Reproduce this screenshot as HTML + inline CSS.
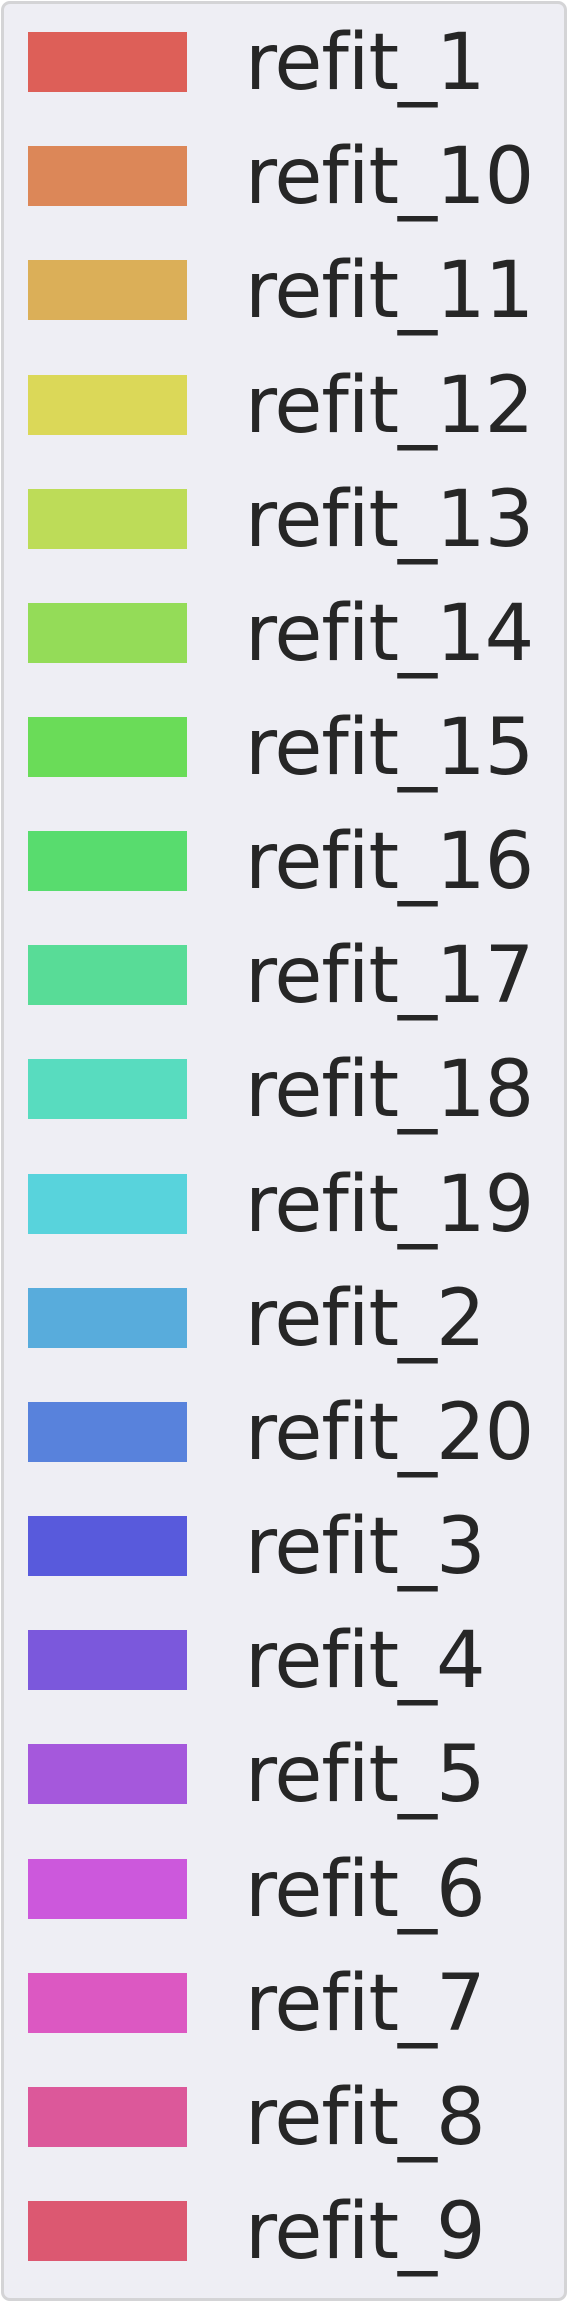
<!DOCTYPE html>
<html><head><style>
html,body{margin:0;padding:0;background:#ffffff;}
body{width:568px;height:2301px;position:relative;overflow:hidden;font-family:"DejaVu Sans","Liberation Sans",sans-serif;}
.box{position:absolute;left:1px;top:1px;width:560px;height:2294px;border:3px solid #d4d4d6;border-radius:9px;background:#eeeef4;}
.s{position:absolute;left:28px;width:159px;height:60px;}
.t{position:absolute;left:245px;font-size:78px;line-height:78px;letter-spacing:-1px;font-variant-ligatures:none;font-feature-settings:"liga" 0;color:#262626;white-space:nowrap;margin-top:1.5px;}
</style></head><body>
<div class="box"></div>
<div class="s" style="top:32px;background:#dd5f58"></div><div class="t" style="top:22.5px">ref&zwnj;it_1</div>
<div class="s" style="top:146px;background:#dc8758"></div><div class="t" style="top:136.7px">ref&zwnj;it_10</div>
<div class="s" style="top:260px;background:#dbaf58"></div><div class="t" style="top:250.8px">ref&zwnj;it_11</div>
<div class="s" style="top:375px;background:#dbd858"></div><div class="t" style="top:365px">ref&zwnj;it_12</div>
<div class="s" style="top:489px;background:#bddc58"></div><div class="t" style="top:479.1px">ref&zwnj;it_13</div>
<div class="s" style="top:603px;background:#94dc58"></div><div class="t" style="top:593.3px">ref&zwnj;it_14</div>
<div class="s" style="top:717px;background:#6adc58"></div><div class="t" style="top:707.5px">ref&zwnj;it_15</div>
<div class="s" style="top:831px;background:#58dc6e"></div><div class="t" style="top:821.6px">ref&zwnj;it_16</div>
<div class="s" style="top:945px;background:#58dc97"></div><div class="t" style="top:935.8px">ref&zwnj;it_17</div>
<div class="s" style="top:1059px;background:#58dcbf"></div><div class="t" style="top:1049.9px">ref&zwnj;it_18</div>
<div class="s" style="top:1174px;background:#58d3dc"></div><div class="t" style="top:1164.1px">ref&zwnj;it_19</div>
<div class="s" style="top:1288px;background:#58acdc"></div><div class="t" style="top:1278.3px">ref&zwnj;it_2</div>
<div class="s" style="top:1402px;background:#5882dc"></div><div class="t" style="top:1392.4px">ref&zwnj;it_20</div>
<div class="s" style="top:1516px;background:#585adc"></div><div class="t" style="top:1506.6px">ref&zwnj;it_3</div>
<div class="s" style="top:1630px;background:#7b58dc"></div><div class="t" style="top:1620.7px">ref&zwnj;it_4</div>
<div class="s" style="top:1744px;background:#a558dc"></div><div class="t" style="top:1734.9px">ref&zwnj;it_5</div>
<div class="s" style="top:1859px;background:#cc58dc"></div><div class="t" style="top:1849.1px">ref&zwnj;it_6</div>
<div class="s" style="top:1973px;background:#dc58c2"></div><div class="t" style="top:1963.2px">ref&zwnj;it_7</div>
<div class="s" style="top:2087px;background:#dc589a"></div><div class="t" style="top:2077.4px">ref&zwnj;it_8</div>
<div class="s" style="top:2201px;background:#dc5871"></div><div class="t" style="top:2191.5px">ref&zwnj;it_9</div>
</body></html>
